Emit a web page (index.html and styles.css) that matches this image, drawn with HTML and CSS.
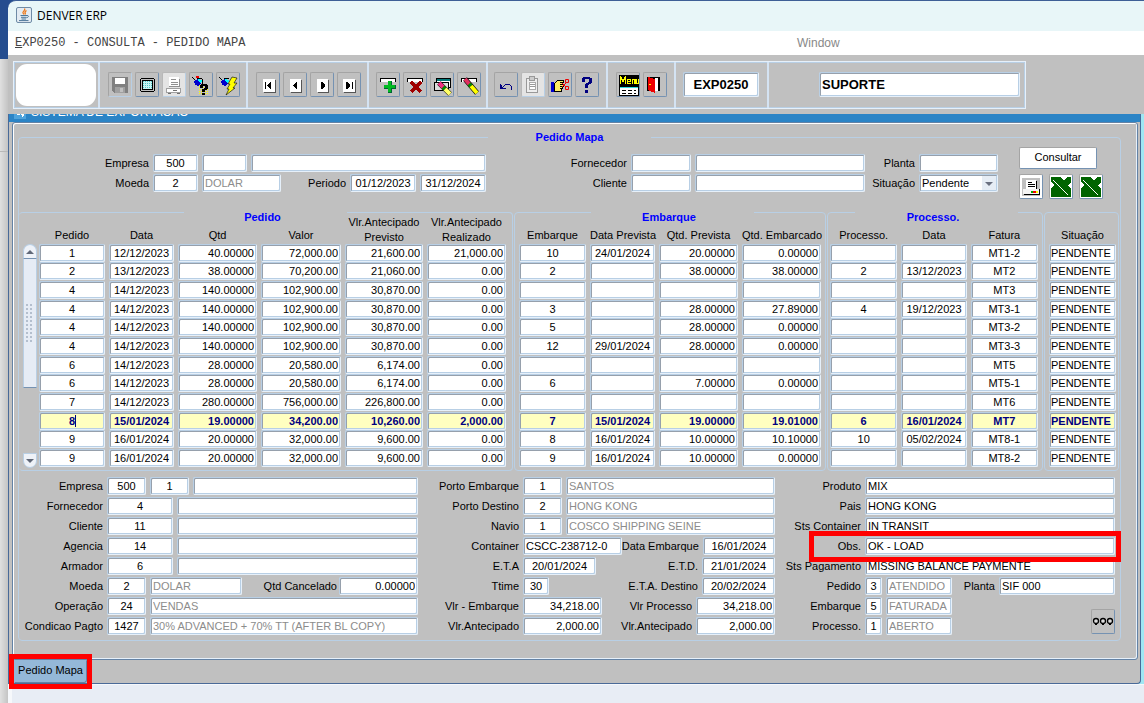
FILE: index.html
```html
<!DOCTYPE html>
<html lang="pt-BR">
<head>
  <meta charset="UTF-8">
  <title>DENVER ERP</title>
  <link rel="stylesheet" href="styles.css">
</head>
<body>
  <div class="desktop-edge"></div>
  <div class="app">
    <header class="titlebar">
      <svg class="java" width="16" height="16" viewBox="0 0 16 16">
        <rect x="0.5" y="0.5" width="15" height="15" rx="1.5" fill="#e3ebf2" stroke="#6f8ba6"/>
        <path d="M8.5 1.5c1.5 2-2.5 3-1.5 4.5l1 1.5M10.5 3.5c-2 1-2 2-1 4" fill="none" stroke="#ee7a1b" stroke-width="1.3"/>
        <path d="M4.5 8.5h6.5M5 10.3h5.5M5.5 12h4.5M3 13.6h9.5M11 8.5c2.5 0 1.5 2-.5 2.3" fill="none" stroke="#4b7699"/>
      </svg>
      DENVER ERP
    </header>
    <nav class="menubar">
      <span class="menu-title"><u>E</u>XP0250 - CONSULTA - PEDIDO MAPA</span>
      <span class="menu-window">Window</span>
    </nav>

    <div class="toolbar">
      <div class="toolbar-frame">
        <div class="tool-group logo-group"><div class="logo"></div></div>
        <div class="tool-group g-file">
          <button class="tool pale" type="button" aria-label="Salvar"><svg viewBox="0 0 24 24"><path fill="#808080" d="M4 4h16v16H6l-2-2z"/><path fill="#fff" d="M7 5h10v6H7z"/><path fill="#a0a0a0" d="M7 14h10v6H7z"/><path fill="#c0c0c0" d="M12 15h3v4h-3z"/></svg></button>
          <button class="tool" type="button" aria-label="Tela"><svg viewBox="0 0 24 24"><path d="M6 5h13v1h1v12h-1v1H6v-1H5V6h1z"/><path fill="#c0c0c0" d="M6 6h13v12H6z"/><path d="M7 7h11v10H7z"/><path fill="#c8f4f4" d="M8 8h9v8H8z"/><path stroke="#4fc8c8" stroke-dasharray="1 1" d="M8 8.500h9M8 10.500h9M8 12.500h9M8 14.500h9"/></svg></button>
          <button class="tool lit" type="button" aria-label="Imprimir"><svg viewBox="0 0 24 24"><path fill="#fff" d="M7 4h10v10H7z"/><path stroke="#909090" d="M9 6.500h5M9 9.500h7M9 11.500h7M17.500 6v8M7 13.500h11"/><path fill="#fff" stroke="#a0a0a0" d="M4.500 15.500h14v4h-14z"/><path stroke="#707070" d="M11 17.500h4M6 20.500h3M15 20.500h3"/></svg></button>
          <button class="tool" type="button" aria-label="Entrar consulta"><svg viewBox="0 0 24 24"><path stroke="#ff0" stroke-dasharray="1 1" d="M10 12.500h10M10 14.500h10M10 16.500h10M10 18.500h10M10 20.500h10"/><path fill="#00c" d="M5 8l4-2 3 5-3 2-3-1z"/><path fill="#0ff" d="M9 6l4 1-1 4-3-3z"/><path fill="none" stroke="#000" d="M3 4l3 3M8 5l5 1v5"/><path fill="#e00" d="M7 3h3v2H7z"/><path d="M12 11h6v1h1v4h-1v1h-2v2h-3v-3h2v-1h1v-2h-2v2h-3v-3h1zM13 20h3v2h-3z"/></svg></button>
          <button class="tool" type="button" aria-label="Executar consulta"><svg viewBox="0 0 24 24"><path fill="#00c" d="M5 8l4-2 3 5-3 2-3-1z"/><path fill="#0ff" d="M9 6l4 1-1 4-3-3z"/><path fill="none" stroke="#000" d="M3 4l3 3M8 5l5 1"/><path class="soft" fill="#ff0" stroke="#000" stroke-width=".6" d="M16 4l5 1-3 5h3l-4 5h2l-9 7 3-6h-2l3-5h-2z"/></svg></button>
        </div>
        <div class="tool-group g-nav">
          <button class="tool" type="button" aria-label="Primeiro"><svg viewBox="0 0 24 24"><path fill="#555" d="M8 7h12v13H8z"/><path fill="#fff" d="M7 6h12v13H7z"/><path d="M9 9h1v7H9zM15 9v7h-1l-3-3v-1l3-3z"/></svg></button>
          <button class="tool" type="button" aria-label="Anterior"><svg viewBox="0 0 24 24"><path fill="#555" d="M8 7h11v13H8z"/><path fill="#fff" d="M7 6h11v13H7z"/><path d="M14 9v7h-1l-3-3v-1l3-3z"/></svg></button>
          <button class="tool" type="button" aria-label="Próximo"><svg viewBox="0 0 24 24"><path fill="#555" d="M8 7h11v13H8z"/><path fill="#fff" d="M7 6h11v13H7z"/><path d="M11 9v7h1l3-3v-1l-3-3z"/></svg></button>
          <button class="tool" type="button" aria-label="Último"><svg viewBox="0 0 24 24"><path fill="#555" d="M7 7h12v13H7z"/><path fill="#fff" d="M6 6h12v13H6z"/><path d="M15 9h1v7h-1zM9 9v7h1l3-3v-1l-3-3z"/></svg></button>
        </div>
        <div class="tool-group g-rec">
          <button class="tool" type="button" aria-label="Inserir"><svg viewBox="0 0 24 24"><path fill="#000" d="M4 5h16v4H4z"/><path fill="#fff" d="M5 6h14v3H5z"/><path fill="#063" d="M12 8h4v4h4v4h-4v4h-4v-4H8v-4h4z"/><path fill="#0b2" d="M12 8h3v4h4v3h-4v4h-3v-4H8v-3h4z"/></svg></button>
          <button class="tool" type="button" aria-label="Remover"><svg viewBox="0 0 24 24"><path fill="#000" d="M4 5h16v4H4z"/><path fill="#fff" d="M5 6h14v3H5z"/><path stroke="#a00000" stroke-width="3" d="M8 9l10 10M18 9L8 19"/></svg></button>
          <button class="tool" type="button" aria-label="Limpar bloco"><svg viewBox="0 0 24 24"><path d="M6 5h15v10H6z"/><path fill="#077" d="M7 6h13v2H7z"/><path fill="#fff" d="M7 8h13v6H7z"/><path d="M4 9h15v9H4z"/><path fill="#ddd" d="M5 10h13v7H5z"/><g class="soft"><path stroke="#000" stroke-width="5" d="M9 10l11 11"/><path stroke="#f03080" stroke-width="4" d="M9 10l5 5"/><path stroke="#080" stroke-width="4" d="M13 14l2 2"/><path stroke="#ff6" stroke-width="4" d="M15 16l5 5"/></g></svg></button>
          <button class="tool" type="button" aria-label="Limpar registro"><svg viewBox="0 0 24 24"><path fill="#000" d="M4 5h16v4H4z"/><path fill="#fff" d="M5 6h14v3H5z"/><g class="soft"><path stroke="#000" stroke-width="5" d="M8 6l12 14"/><path stroke="#e03060" stroke-width="4" d="M8 6l5 6"/><path stroke="#080" stroke-width="4" d="M12 11l2 2"/><path stroke="#ff0" stroke-width="4" d="M14 13l6 7"/></g></svg></button>
        </div>
        <div class="tool-group g-edit">
          <button class="tool" type="button" aria-label="Desfazer"><svg viewBox="0 0 24 24"><path fill="none" stroke="#000080" d="M8 15l4-4h3l2 2v4"/><path fill="#000080" d="M6 11h1v1h1v3h4v1H6z"/></svg></button>
          <button class="tool lit" type="button" aria-label="Colar"><svg viewBox="0 0 24 24"><path fill="#eee" stroke="#999" d="M5.500 5.500h11v14h-11z"/><path fill="#ccc" stroke="#999" d="M8.500 3.500h5v4h-5z"/><path fill="#fff" stroke="#aaa" d="M8.500 9.500h6v7h-6z"/><path stroke="#999" d="M9 11.500h5M9 13.500h5"/></svg></button>
          <button class="tool" type="button" aria-label="Recortar"><svg viewBox="0 0 24 24"><path fill="#00c" d="M3 9h3v10H3z"/><path fill="#000" d="M6 10l3-3h7v3h-1v1h1v3h-1v2h-1v3H6z"/><path fill="#fe6" d="M7 10l3-2h5v1h-3v1h3v1h-3v1h3v1h-3v1h2v1h-2v1h1v2H7z"/><path class="soft" fill="none" stroke="#e00" d="M14 14l4-4M14 10l4 4M17.500 6.500h3v3h-3zM17.500 13.500h3v3h-3z"/></svg></button>
          <button class="tool" type="button" aria-label="Ajuda"><svg viewBox="0 0 24 24"><path fill="#000080" d="M8 4h7v1h2v5h-1v1h-2v1h-1v3h-3v-4h1v-1h2V9h1V6h-4v3H7V5h1zM10 17h3v3h-3z"/></svg></button>
        </div>
        <div class="tool-group g-menu">
          <button class="tool" type="button" aria-label="Menu"><svg viewBox="0 0 24 24"><path fill="#000" d="M3 2h20v11H3z"/><path fill="none" stroke="#ff0" stroke-width="1.500" d="M4.500 11V4L7 8l2.500-4v7M11.500 8.500h3V6.500h-3v4h3M16.500 11V6.500h2.500V11M20.500 6v4.500h2V6"/><path d="M3 13h20v10H3z"/><path fill="#3dd" d="M4 14h18v1H4z"/><path fill="#fff" d="M4 15h18v7H4z"/><path stroke="#000" stroke-dasharray="4 2" d="M6 17.500h14M6 20.500h14"/></svg></button>
          <button class="tool" type="button" aria-label="Sair"><svg viewBox="0 0 24 24"><path d="M4 4h13v14H4z"/><path fill="#fff" d="M12 5h3v13h-3z"/><path fill="#e00" d="M5 4l7 2v14l-7-3z"/><path fill="#ff0" d="M6 11h2v1H6z"/></svg></button>
        </div>
        <div class="tool-group g-prog"><input class="box big program" type="text" value="EXP0250" aria-label="Programa"></div>
        <div class="tool-group g-user"><input class="box big user" type="text" value="SUPORTE" aria-label="Usuário"></div>
      </div>
    </div>

    <div class="workspace">
      <main class="mdi">
        <div class="mdi-title">
          <svg width="12" height="12" viewBox="0 0 12 12"><rect width="12" height="12" fill="#4fa3dc"/><path d="M3 3h3v5H3zM7 6h3v2l-2 2z" fill="#fff"/></svg>
          <span>SISTEMA DE EXPORTACAO</span>
        </div>
        <div class="panel">
          <form onsubmit="return false">
          <fieldset class="frame">
            <legend>Pedido Mapa</legend>

            <!-- filtros -->
            <div class="filters">
              <div class="rows">
                <div class="row">
                  <label class="lb-filter" for="fEmpresa">Empresa</label>
                  <input class="box c w-filter" id="fEmpresa" value="500">
                  <input class="box w-filter" aria-label="Filial">
                  <input class="box grow" aria-label="Nome da empresa">
                </div>
                <div class="row">
                  <label class="lb-filter" for="fMoeda">Moeda</label>
                  <input class="box c w-filter" id="fMoeda" value="2">
                  <input class="box dim w-value" value="DOLAR" aria-label="Nome da moeda">
                  <label class="fill" for="fPeriodo">Periodo</label>
                  <input class="box c w-date" id="fPeriodo" value="01/12/2023">
                  <input class="box c w-date" value="31/12/2024" aria-label="Periodo final">
                </div>
              </div>
              <div class="rows">
                <div class="row">
                  <label class="lb-partner" for="fForn">Fornecedor</label>
                  <input class="box w-partner" id="fForn">
                  <input class="box grow" aria-label="Nome do fornecedor">
                </div>
                <div class="row">
                  <label class="lb-partner" for="fCli">Cliente</label>
                  <input class="box w-partner" id="fCli">
                  <input class="box grow" aria-label="Nome do cliente">
                </div>
              </div>
              <div class="rows">
                <div class="row">
                  <label class="fill" for="fPlanta">Planta</label>
                  <input class="box w-value" id="fPlanta">
                </div>
                <div class="row">
                  <label class="fill" for="fSit">Situação</label>
                  <span class="combo w-value">
                    <select class="box" id="fSit"><option>Pendente</option><option>Atendido</option></select>
                  </span>
                </div>
              </div>
              <div class="actions">
                <button class="consult" type="button">Consultar</button>
                <div class="action-icons">
                  <button class="tool white" type="button" aria-label="Imprimir"><svg viewBox="0 0 24 24"><path fill="#c0c0c0" d="M3 3h18v18H3z"/><path d="M8 6h10v9H8z"/><path fill="#fff" d="M7 5h10v9H7z"/><path stroke="#000" d="M9 7.500h4M9 9.500h7M9 11.500h7"/><path d="M5 14h16v6H5z"/><path fill="#f4f4f4" d="M4 14h16v5H4z"/><path fill="#0a0" d="M12 16h2v2h-2z"/><path fill="#e00" d="M14 16h3v2h-3z"/><path fill="#ff0" d="M17 16h2v2h-2z"/></svg></button>
                  <button class="tool white" type="button" aria-label="Excel resumido"><svg viewBox="0 0 24 24"><path fill="#006400" d="M2 2h10l3 4 3-4h4v5l-3 3 3 4v8H2v-8l3-4-3-3z"/><path stroke="#fff" d="M4 5l15 15"/></svg></button>
                  <button class="tool white" type="button" aria-label="Excel detalhado"><svg viewBox="0 0 24 24"><path fill="#006400" d="M2 2h10l3 4 3-4h4v5l-3 3 3 4v8H2v-8l3-4-3-3z"/><path stroke="#fff" d="M4 5l15 15"/></svg></button>
                </div>
              </div>
            </div>

            <!-- grades, preenchidas em script.js -->
            <div class="groups">
              <fieldset class="group g-pedido">
                <legend>Pedido</legend>
                <div class="with-scroll">
                  <div class="scroll">
                    <button class="sc-up" type="button" aria-label="Subir"></button>
                    <div class="sc-thumb"></div>
                    <button class="sc-down" type="button" aria-label="Descer"></button>
                  </div>
                  <table class="grid" id="gridPedido"></table>
                </div>
              </fieldset>
              <fieldset class="group g-embarque">
                <legend>Embarque</legend>
                <table class="grid" id="gridEmbarque"></table>
              </fieldset>
              <fieldset class="group g-processo">
                <legend>Processo.</legend>
                <table class="grid" id="gridProcesso"></table>
              </fieldset>
              <fieldset class="group g-situacao">
                <table class="grid" id="gridSituacao"></table>
              </fieldset>
            </div>

            <!-- detalhe do pedido atual -->
            <div class="details">
              <div class="rows">
                <div class="row"><label class="lb-left" for="dEmpresa">Empresa</label><input class="box c w-code" id="dEmpresa" value="500"><input class="box c w-code" value="1" aria-label="Filial"><input class="box grow" aria-label="Nome da empresa"></div>
                <div class="row"><label class="lb-left" for="dForn">Fornecedor</label><input class="box c w-date" id="dForn" value="4"><input class="box grow" aria-label="Nome do fornecedor"></div>
                <div class="row"><label class="lb-left" for="dCli">Cliente</label><input class="box c w-date" id="dCli" value="11"><input class="box grow" aria-label="Nome do cliente"></div>
                <div class="row"><label class="lb-left" for="dAg">Agencia</label><input class="box c w-date" id="dAg" value="14"><input class="box grow" aria-label="Nome da agencia"></div>
                <div class="row"><label class="lb-left" for="dArm">Armador</label><input class="box c w-date" id="dArm" value="6"><input class="box grow" aria-label="Nome do armador"></div>
                <div class="row"><label class="lb-left" for="dMoeda">Moeda</label><input class="box c w-code" id="dMoeda" value="2"><input class="box dim w-coin" value="DOLAR" aria-label="Nome da moeda"><label class="fill tight" for="dCanc">Qtd Cancelado</label><input class="box r w-value" id="dCanc" value="0.00000"></div>
                <div class="row"><label class="lb-left" for="dOper">Operação</label><input class="box c w-code" id="dOper" value="24"><input class="box dim grow" value="VENDAS" aria-label="Nome da operação"></div>
                <div class="row"><label class="lb-left" for="dCond">Condicao Pagto</label><input class="box c w-code" id="dCond" value="1427"><input class="box dim grow" value="30% ADVANCED + 70% TT (AFTER BL COPY)" aria-label="Nome da condição"></div>
              </div>

              <div class="rows">
                <div class="row"><label class="lb-mid" for="dPe">Porto Embarque</label><input class="box c w-code" id="dPe" value="1"><input class="box dim grow" value="SANTOS" aria-label="Nome do porto de embarque"></div>
                <div class="row"><label class="lb-mid" for="dPd">Porto Destino</label><input class="box c w-code" id="dPd" value="2"><input class="box dim grow" value="HONG KONG" aria-label="Nome do porto de destino"></div>
                <div class="row"><label class="lb-mid" for="dNav">Navio</label><input class="box c w-code" id="dNav" value="1"><input class="box dim grow" value="COSCO SHIPPING SEINE" aria-label="Nome do navio"></div>
                <div class="row"><label class="lb-mid" for="dCont">Container</label><input class="box w-cont" id="dCont" value="CSCC-238712-0"><label class="fill snug" for="dDe">Data Embarque</label><input class="box c w-eta" id="dDe" value="16/01/2024"></div>
                <div class="row"><label class="lb-mid" for="dEta">E.T.A</label><input class="box c w-eta" id="dEta" value="20/01/2024"><label class="fill" for="dEtd">E.T.D.</label><input class="box c w-eta" id="dEtd" value="21/01/2024"></div>
                <div class="row"><label class="lb-mid" for="dTt">Ttime</label><input class="box c w-time" id="dTt" value="30"><label class="fill" for="dEd">E.T.A. Destino</label><input class="box c w-eta" id="dEd" value="20/02/2024"></div>
                <div class="row"><label class="lb-mid" for="dVe">Vlr - Embarque</label><input class="box r w-value" id="dVe" value="34,218.00"><label class="fill" for="dVp">Vlr Processo</label><input class="box r w-value" id="dVp" value="34,218.00"></div>
                <div class="row"><label class="lb-mid" for="dVa">Vlr.Antecipado</label><input class="box r w-value" id="dVa" value="2,000.00"><label class="fill" for="dVb">Vlr.Antecipado</label><input class="box r w-value" id="dVb" value="2,000.00"></div>
              </div>

              <div class="rows">
                <div class="row"><label class="lb-right" for="dProd">Produto</label><input class="box grow" id="dProd" value="MIX"></div>
                <div class="row"><label class="lb-right" for="dPais">Pais</label><input class="box grow" id="dPais" value="HONG KONG"></div>
                <div class="row"><label class="lb-right" for="dSc">Sts Container</label><input class="box grow" id="dSc" value="IN TRANSIT"></div>
                <div class="row marked"><label class="lb-right" for="dObs">Obs.</label><input class="box grow" id="dObs" value="OK - LOAD"></div>
                <div class="row"><label class="lb-right" for="dSp">Sts Pagamento</label><input class="box grow" id="dSp" value="MISSING BALANCE PAYMENTE"></div>
                <div class="row"><label class="lb-right" for="dPed">Pedido</label><input class="box c w-flag" id="dPed" value="3"><input class="box dim w-date" value="ATENDIDO" aria-label="Situação do pedido"><label class="lb-plant" for="dPl">Planta</label><input class="box grow" id="dPl" value="SIF 000"></div>
                <div class="status">
                  <div class="rows">
                    <div class="row"><label class="lb-right" for="dEmb">Embarque</label><input class="box c w-flag" id="dEmb" value="5"><input class="box dim w-date" value="FATURADA" aria-label="Situação do embarque"></div>
                    <div class="row"><label class="lb-right" for="dProc">Processo.</label><input class="box c w-flag" id="dProc" value="1"><input class="box dim w-date" value="ABERTO" aria-label="Situação do processo"></div>
                  </div>
                  <button class="tool" type="button" aria-label="Mais opções"><svg class="smooth" viewBox="0 0 24 24"><g fill="#ddd" stroke="#000" stroke-width="1.300"><circle cx="5" cy="11" r="2.500"/><circle cx="12" cy="11" r="2.500"/><circle cx="19" cy="11" r="2.500"/></g><path stroke="#000" d="M4 14.500h2M11 14.500h2M18 14.500h2"/></svg></button>
                </div>
              </div>
            </div>
          </fieldset>
          </form>
        </div>
        <div class="tabs">
          <div class="tab-wrap"><button class="tab" type="button">Pedido Mapa</button></div>
        </div>
      </main>
    </div>
    <footer class="statusbar"></footer>
  </div>
  <script src="script.js"></script>
</body>
</html>
```
FILE: styles.css
```css
* { box-sizing: border-box; }
body {
  margin: 0;
  display: flex;
  min-height: 100vh;
  background: linear-gradient(#254d8f 59px, #dcdcdc 59px);
  font: 11px "Liberation Sans", Arial, sans-serif;
  color: #000;
}
input, button, select { font: inherit; color: inherit; margin: 0; }
fieldset { margin: 0; padding: 0; min-width: 0; }
svg { display: block; shape-rendering: crispEdges; }
svg.java, svg.smooth, .soft { shape-rendering: auto; }

.desktop-edge {
  width: 8px; flex: none;
  background: linear-gradient(#254d8f 59px, transparent 59px, transparent 151px, #b8b8b8 151px, #b8b8b8 152px, transparent 152px),
    linear-gradient(90deg, #e0e0e0, #c4c4c4);
}
.app { flex: 1; min-width: 0; display: flex; flex-direction: column; }

/* title + menu */
.titlebar {
  height: 31px;
  display: flex; align-items: center; gap: 5px;
  padding: 0 0 2px 8px;
  background: #e8f6f8;
  border-top: 1px solid #3d5f96;
  border-radius: 8px 0 0 0;
  font: 12px "Open Sans", "Noto Sans", sans-serif;
}
.menubar {
  height: 24px;
  display: flex; align-items: center;
  padding-left: 7px;
  background: #fff;
  color: #444;
}
.menu-title { flex: 782 1 0; font: 12px "Liberation Mono", "Courier New", monospace; }
.menu-window { flex: 347 1 0; font-size: 12px; color: #888; }

/* toolbar */
.toolbar { background: #c0c0c0; padding: 6px 5px 5px; }
.toolbar-frame {
  display: flex;
  width: 1013px; height: 48px;
  border: 1px solid #e6f0fa;
  box-shadow: inset 0 0 0 1px #b8cfe5;
}
.tool-group {
  display: flex; align-items: center; gap: 3px;
  padding: 0 0 1px 9px;
  border-right: 2px solid #d4e3f3;
}
.logo-group { width: 86px; padding-left: 2px; }
.logo { width: 80px; height: 42px; background: #fff; border-radius: 11px; }
.g-file { width: 148px; padding-left: 8px; }
.g-nav { width: 121px; padding-left: 8px; }
.g-rec { width: 119px; padding-left: 7px; }
.g-edit { width: 120px; padding-left: 6px; }
.g-menu { width: 68px; padding-left: 8px; }
.g-prog { width: 93px; padding-left: 7px; }
.g-user { flex: 1; padding-left: 50px; border-right: 0; }
.tool {
  width: 24px; height: 25px; flex: none; padding: 0;
  background: #c0c0c0;
  border: 1px solid;
  border-color: #a4a4a4 #7592b2 #7592b2 #a4a4a4;
  border-radius: 2px;
}
.tool svg { width: 24px; height: 24px; margin: -1px; }
.tool.pale { border-color: #a4a4a4 #b8cfe5 #b8cfe5 #a4a4a4; }
.tool.lit { background: #e4e4e4; border-color: #b8b8b8 #b8cfe5 #b8cfe5 #b8b8b8; }
.tool.white { background: #fff; }

/* text boxes */
.box {
  height: 18px; min-width: 0; padding: 0 2px;
  background: #fff;
  border: 1px solid;
  border-color: #b8cfe5 #e6f0fa #e6f0fa #b8cfe5;
  border-radius: 2px;
  box-shadow: inset 1px 1px #96a0ac, inset -1px -1px #b8cfe5;
  outline: 0;
}
.c { text-align: center; }
.r { text-align: right; }
.dim { color: #8c8c8c; }
.big { height: 25px; font-size: 13px; font-weight: bold; }
.program { width: 76px; text-align: center; }
.user { width: 201px; }

/* inner window */
.workspace { background: #9fe6f3; padding-right: 3px; }
.mdi {
  background: #c0c0c0;
  border: 1px solid #4a6a98;
  border-top: 0;
  border-radius: 0 0 4px 0;
}
.mdi-title {
  display: flex; align-items: flex-end; gap: 5px;
  height: 8px; padding: 0 0 3px 5px;
  overflow: hidden;
  background: #2b84c6;
  color: #fff;
  font-size: 12px; line-height: 14px;
}
.panel {
  margin: 0 2px 0 3px;
  padding: 4px 16px 18px 5px;
  border: 1px solid #6382a5;
  border-radius: 3px;
  box-shadow: inset 1px 1px #fff, inset -1px -1px #e6f0fa;
}
.frame { border: 1px solid #b8cfe5; border-radius: 4px; }
legend {
  width: 163px; height: 20px; line-height: 20px;
  margin: 0 auto; padding: 0;
  text-align: center;
  font-size: 11px; font-weight: bold; color: #00f;
}

.rows { min-width: 0; }
.row { display: flex; align-items: center; gap: 4px; height: 20px; padding-bottom: 2px; }
label { text-align: right; white-space: nowrap; flex: none; }
.grow { flex: 1; width: 0; }
label.fill { flex: 1; }
label.tight { margin-right: -2px; }
label.snug { margin-left: -4px; }

.filters {
  display: grid;
  grid-template-columns: 467fr 379fr 133px 122px;
}
.filters .rows { padding-top: 7px; }
.lb-filter { width: 130px; }
.lb-partner { width: 141px; }
.w-filter { width: 45px; }
.w-date { width: 66px; }
.w-value { width: 79px; }
.w-partner { width: 60px; }
.combo { position: relative; }
.combo select { width: 100%; appearance: none; display: block; }
.combo::after {
  content: ""; position: absolute; right: 2px; top: 2px; width: 14px; height: 14px;
  background: #e6edf5;
  pointer-events: none;
}
.combo::before {
  content: ""; position: absolute; z-index: 1; right: 5px; top: 8px;
  border: 4px solid transparent; border-top: 4px solid #6a7080; border-bottom: 0;
  pointer-events: none;
}
.actions { padding-left: 21px; }
.consult {
  width: 78px; height: 22px; padding: 0 0 2px;
  background: #fff;
  border: 1px solid;
  border-color: #a4a4a4 #7592b2 #7592b2 #a4a4a4;
  border-radius: 2px;
}
.action-icons { display: flex; gap: 6px; padding-top: 5px; }

/* grids */
.groups { display: flex; align-items: stretch; gap: 1px; margin-top: 3px; padding-right: 1px; }
.group { border: 1px solid #b8cfe5; border-radius: 4px; padding-bottom: 2px; }
.group legend { line-height: 30px; padding-right: 6px; }
.g-pedido { flex: 494 1 494px; border-left: 0; }
.g-embarque { flex: 312 1 312px; padding-left: 4px; }
.g-processo { flex: 216 1 216px; padding-left: 2px; }
.g-situacao { flex: 75 1 75px; margin-top: 10px; padding: 9px 0 2px 4px; }
.g-situacao .box { padding: 0 1px; }
.with-scroll { display: flex; gap: 2px; padding: 0 2px 0 4px; }
.with-scroll .grid { flex: 1; width: 0; }
.grid {
  width: 100%; margin-top: -8px;
  table-layout: fixed; border-collapse: collapse;
}
.grid th {
  height: 30px; padding: 0 4px 1px 0;
  vertical-align: bottom;
  font-weight: normal; line-height: 15px; white-space: nowrap;
}
.grid th .two { display: block; height: 26px; overflow: hidden; margin-bottom: 2px; }
.grid td { position: relative; height: 19px; padding: 0 4px 0 0; vertical-align: top; }
.grid tr:nth-child(3n+1) td { height: 18px; }
.grid .box { display: block; width: 100%; height: 18px; }
.grid tr.current .box { background: #ffffc0; color: #000080; font-weight: bold; }
#gridSituacao th, #gridSituacao td { padding-right: 2px; }
.caret::after {
  content: ""; position: absolute; left: 50%; top: 3px; width: 1px; height: 12px;
  margin-left: 1px;
  background: #000080;
}

.scroll { width: 14px; flex: none; display: flex; flex-direction: column; margin-top: 22px; }
.scroll button { position: relative; height: 15px; padding: 0; background: #eef2f8; border: 1px solid #b8cfe5; }
.scroll .sc-up { border-radius: 7px 7px 0 0; border-bottom-color: #7592b2; }
.scroll .sc-down { border-radius: 0 0 7px 7px; margin-top: auto; }
.sc-up::after, .sc-down::after { content: ""; position: absolute; left: 2px; top: 5px; border: 4px solid transparent; }
.sc-up::after { border-top: 0; border-bottom-color: #606878; }
.sc-down::after { border-bottom: 0; border-top-color: #606878; }
.sc-thumb {
  height: 129px; padding: 45px 2px;
  background: radial-gradient(circle at 1px 1px, #b4bfce 1px, transparent 1px) content-box 0 0 / 4px 4px, #e6ecf5;
  border: 1px solid #b8cfe5; border-top: 0; border-bottom-color: #7592b2;
}

/* details */
.details {
  display: grid;
  grid-template-columns: 399fr 357fr 340fr;
  padding: 6px 5px 3px 0;
}
.lb-left { width: 84px; }
.lb-mid { width: 101px; }
.lb-right { width: 86px; }
.lb-plant { width: 39px; }
.w-code { width: 39px; }
.w-coin { width: 92px; }
.w-cont { width: 100px; }
.w-eta { width: 73px; }
.w-time { width: 26px; }
.w-flag { width: 17px; padding: 0; }
.status { display: flex; justify-content: space-between; }
.status .tool { align-self: flex-end; margin-bottom: 3px; }
.marked { position: relative; }
.marked::after {
  content: ""; position: absolute; inset: -6px -6px -5px 34px;
  border: 5px solid #f00;
  pointer-events: none;
}

/* window tabs */
.tabs { display: flex; height: 23px; padding-left: 5px; }
.tab-wrap { position: relative; }
.tab-wrap::after {
  content: ""; position: absolute; inset: -6px -5px -6px -5px;
  border: 5px solid #f00;
  pointer-events: none;
}
.tab {
  width: 73px; height: 23px; padding: 0 0 3px;
  background: #94b8d8;
  border: 1px solid; border-color: #94b8d8 #6382a5 #6382a5 #94b8d8;
  border-radius: 0 0 3px 0;
}
.statusbar { flex: 1; min-height: 19px; background: #e8edf5; border-left: 4px solid #f6f8fb; border-top: 1px solid #f6f8fb; }
```
FILE: script.js
```javascript
// colunas: titulo, largura, alinhamento
const grids = {
  gridPedido: [['Pedido', 70, 'c'], ['Data', 69, 'c'], ['Qtd', 83, 'r'], ['Valor', 84, 'r'],
    ['Vlr.Antecipado|Previsto', 82, 'r'], ['Vlr.Antecipado|Realizado', 83, 'r']],
  gridEmbarque: [['Embarque', 71, 'c'], ['Data Prevista', 69, 'c'], ['Qtd. Prevista', 83, 'r'], ['Qtd. Embarcado', 83, 'r']],
  gridProcesso: [['Processo.', 71, 'c'], ['Data', 69, 'c'], ['Fatura', 71, 'c']],
  gridSituacao: [['Situação', 68, 'l']]
};

const pedidos = [
  ['1', '12/12/2023', '40.00000', '72,000.00', '21,600.00', '21,000.00', '10', '24/01/2024', '20.00000', '0.00000', '', '', 'MT1-2'],
  ['2', '13/12/2023', '38.00000', '70,200.00', '21,060.00', '0.00', '2', '', '38.00000', '38.00000', '2', '13/12/2023', 'MT2'],
  ['4', '14/12/2023', '140.00000', '102,900.00', '30,870.00', '0.00', '', '', '', '', '', '', 'MT3'],
  ['4', '14/12/2023', '140.00000', '102,900.00', '30,870.00', '0.00', '3', '', '28.00000', '27.89000', '4', '19/12/2023', 'MT3-1'],
  ['4', '14/12/2023', '140.00000', '102,900.00', '30,870.00', '0.00', '5', '', '28.00000', '0.00000', '', '', 'MT3-2'],
  ['4', '14/12/2023', '140.00000', '102,900.00', '30,870.00', '0.00', '12', '29/01/2024', '28.00000', '0.00000', '', '', 'MT3-3'],
  ['6', '14/12/2023', '28.00000', '20,580.00', '6,174.00', '0.00', '', '', '', '', '', '', 'MT5'],
  ['6', '14/12/2023', '28.00000', '20,580.00', '6,174.00', '0.00', '6', '', '7.00000', '0.00000', '', '', 'MT5-1'],
  ['7', '14/12/2023', '280.00000', '756,000.00', '226,800.00', '0.00', '', '', '', '', '', '', 'MT6'],
  ['8', '15/01/2024', '19.00000', '34,200.00', '10,260.00', '2,000.00', '7', '15/01/2024', '19.00000', '19.01000', '6', '16/01/2024', 'MT7'],
  ['9', '16/01/2024', '20.00000', '32,000.00', '9,600.00', '0.00', '8', '16/01/2024', '10.00000', '10.10000', '10', '05/02/2024', 'MT8-1'],
  ['9', '16/01/2024', '20.00000', '32,000.00', '9,600.00', '0.00', '9', '16/01/2024', '10.00000', '0.00000', '', '', 'MT8-2']
];
const atual = 9;

let inicio = 0;
Object.keys(grids).forEach(id => {
  const cols = grids[id];
  const total = cols.reduce((s, c) => s + c[1], 0);
  let html = '<colgroup>' + cols.map(c => `<col style="width:${c[1] / total * 100}%">`).join('') + '</colgroup>';
  html += '<thead><tr>' + cols.map(c => {
    const partes = c[0].split('|');
    return partes.length > 1 ? `<th><span class="two">${partes.join('<br>')}</span></th>` : `<th>${c[0]}</th>`;
  }).join('') + '</tr></thead><tbody>';
  pedidos.forEach((p, i) => {
    const linha = p.concat('PENDENTE');
    html += i === atual ? '<tr class="current">' : '<tr>';
    cols.forEach((c, j) => {
      const caret = i === atual && inicio + j === 0 ? ' class="caret"' : '';
      html += `<td${caret}><input class="box ${c[2]}" value="${linha[inicio + j]}" aria-label="${c[0].replace('|', ' ')} ${i + 1}"></td>`;
    });
    html += '</tr>';
  });
  document.getElementById(id).innerHTML = html + '</tbody>';
  inicio += cols.length;
});
```
